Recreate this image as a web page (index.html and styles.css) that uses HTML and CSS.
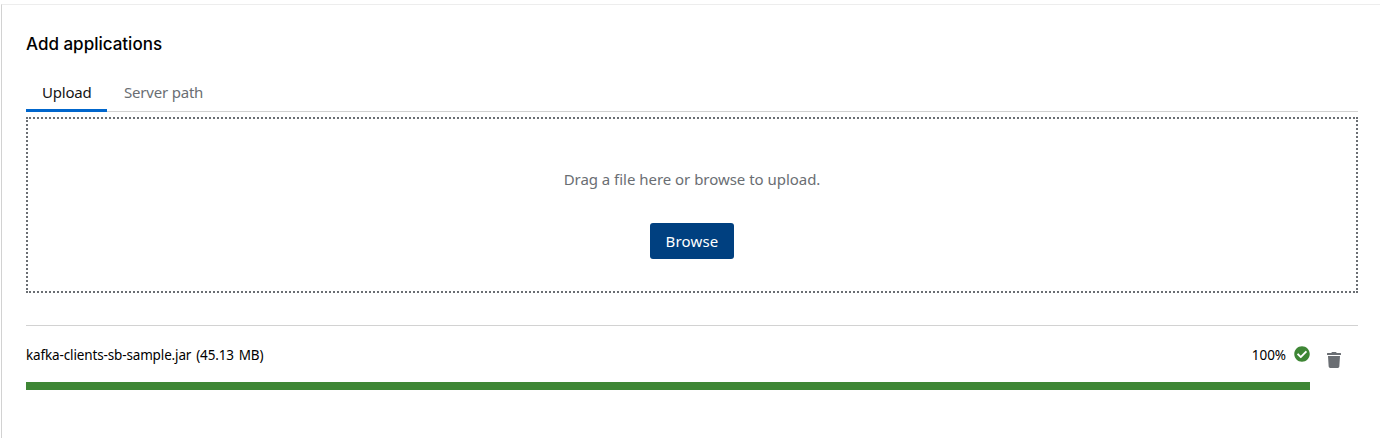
FILE: index.html
```html
<!DOCTYPE html>
<html lang="en">
<head>
<meta charset="utf-8">
<title>Add applications</title>
<link rel="stylesheet" href="styles.css">
</head>
<body>
<main class="panel">
  <h1 class="title">Add applications</h1>
  <nav class="tabs">
    <button class="tab tab-current">Upload</button>
    <button class="tab tab-path">Server path</button>
  </nav>
  <section class="dropzone">
    <p class="hint">Drag a file here or browse to upload.</p>
    <button class="browse">Browse</button>
  </section>
  <section class="upload">
    <div class="progress">
      <div class="info">
        <span class="filename">kafka-clients-sb-sample.jar (45.13 MB)</span>
        <span class="status"><span class="percent">100%</span>
          <svg class="check" viewBox="0 0 512 512"><path fill="#3e8635" d="M504 256c0 136.967-111.033 248-248 248S8 392.967 8 256 119.033 8 256 8s248 111.033 248 248zM227.314 387.314l184-184c6.248-6.248 6.248-16.379 0-22.627l-22.627-22.627c-6.248-6.249-16.379-6.249-22.628 0L216 308.118l-70.059-70.059c-6.248-6.248-16.379-6.248-22.628 0l-22.627 22.627c-6.248 6.248-6.248 16.379 0 22.627l104 104c6.249 6.249 16.379 6.249 22.628.001z"/></svg>
        </span>
      </div>
      <div class="bar"></div>
    </div>
    <button class="remove" aria-label="Remove file"><svg class="trash" viewBox="0 0 448 512"><path fill="#6a6e73" d="M432 32H312l-9.400-18.700A24 24 0 0 0 281.100 0H166.800a23.720 23.720 0 0 0-21.400 13.300L136 32H16A16 16 0 0 0 0 48v32a16 16 0 0 0 16 16h416a16 16 0 0 0 16-16V48a16 16 0 0 0-16-16zM32 128h384l-21.200 339a48 48 0 0 1-47.900 45H101.100a48 48 0 0 1-47.900-45z"/></svg></button>
  </section>
</main>
</body>
</html>
```
FILE: styles.css
```css
* { box-sizing: border-box; }
body { margin: 0; background: #fff; color: #151515; font: 400 15px/24px "Noto Sans", sans-serif; }
button { font: inherit; border: 0; background: none; padding: 0; }
.panel { margin: 4px 0 0 1px; height: 434px; border-top: 1px solid #ededed; border-left: 1px solid #d2d2d2; padding: 25px 22px 0 24px; }
.title { margin: 0; color: #000; font: 500 17px/28px Inter, sans-serif; }
.tabs { display: flex; margin-top: 17px; height: 37px; border-bottom: 1px solid #d2d2d2; }
.tab { height: 37px; padding: 0 16px 1px; color: #6a6e73; letter-spacing: -0.2px; border-bottom: 3px solid transparent; }
.tab-current { width: 81px; color: #151515; border-color: #06c; }
.tab-path { padding-left: 17px; }
.dropzone { margin-top: 5px; height: 176px; border: 2px dotted #6a6e73; display: flex; flex-direction: column; align-items: center; padding-top: 48px; }
.hint { margin: 0; color: #6a6e73; letter-spacing: -0.03px; }
.browse { margin-top: 32px; width: 84px; height: 36px; border-radius: 3px; background: #004080; color: #fff; letter-spacing: 0.15px; }
.upload { margin-top: 32px; border-top: 1px solid #d2d2d2; display: flex; }
.progress { flex: 1; padding-top: 18px; }
.info { display: flex; justify-content: space-between; height: 22px; color: #000; font-size: 13.5px; line-height: 22px; letter-spacing: -0.05px; }
.filename { letter-spacing: -0.14px; word-spacing: 1.5px; }
.status { display: flex; align-items: center; gap: 8px; }
.check { width: 16px; height: 16px; margin-bottom: 2px; }
.bar { height: 8px; margin-top: 16px; background: #3e8635; }
.remove { width: 48px; height: 68px; display: flex; align-items: center; justify-content: center; }
.trash { width: 14px; height: 16px; }
```
